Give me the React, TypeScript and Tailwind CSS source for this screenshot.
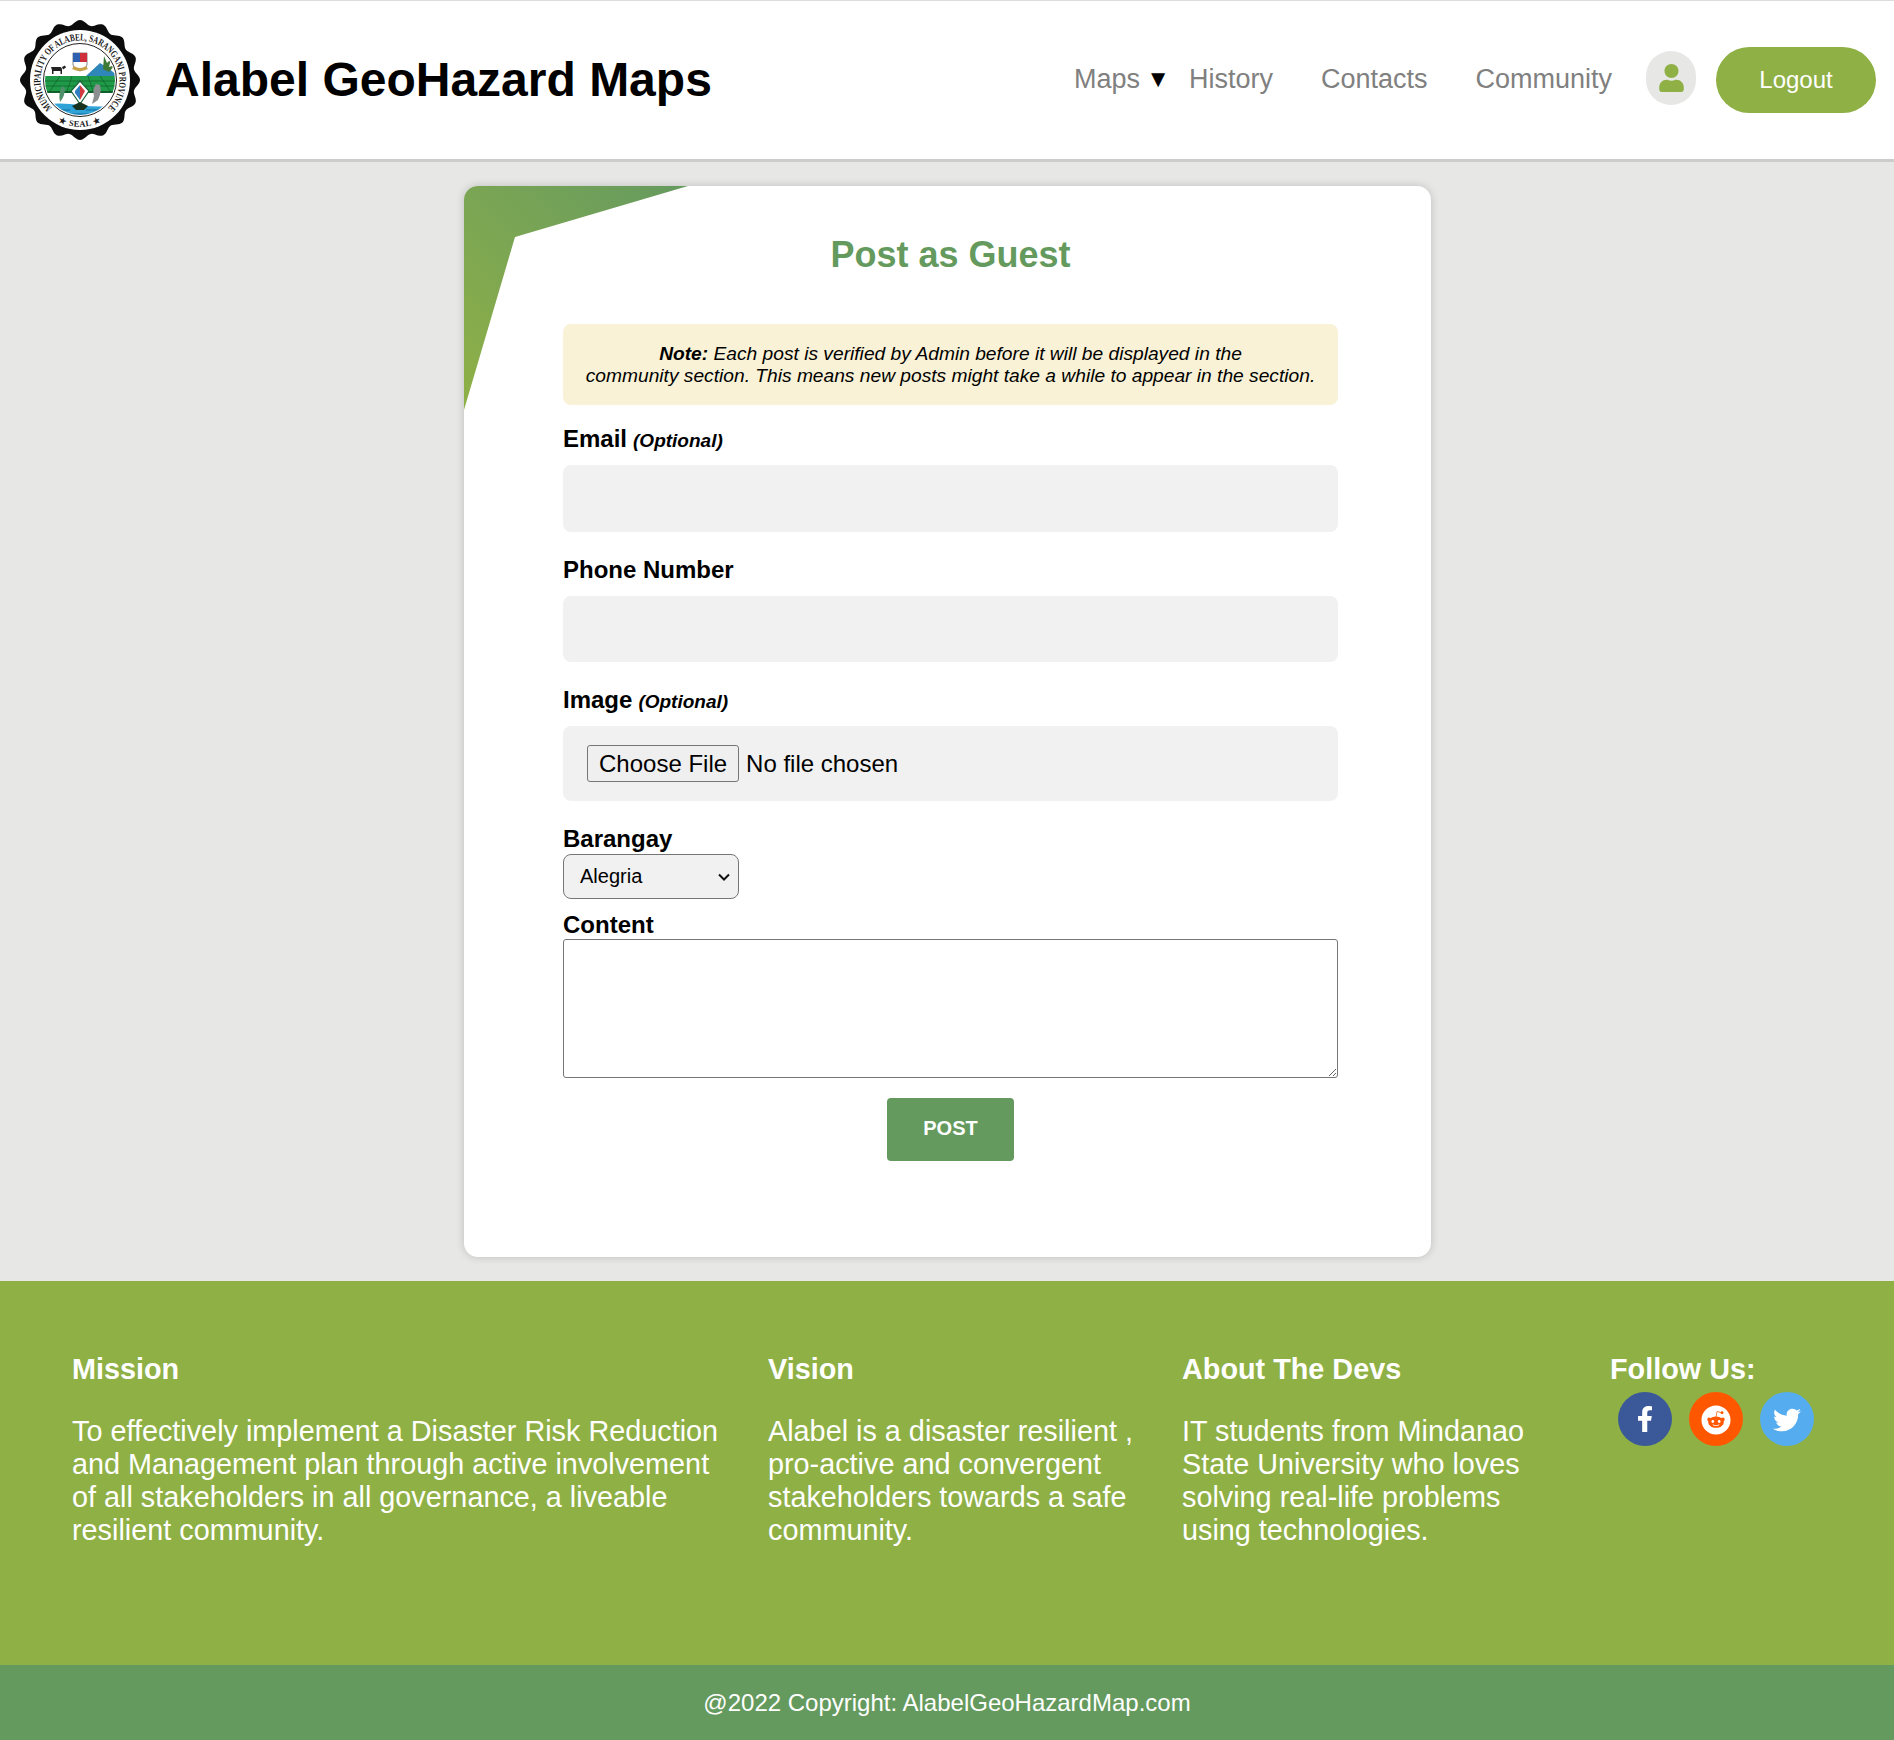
import { FaFacebookF, FaReddit, FaTwitter, FaUser } from 'react-icons/fa';

const FONT = "font-['Liberation_Sans',Arial,sans-serif]";

function scallopPath() {
  const pts: string[] = [];
  const n = 240;
  for (let i = 0; i <= n; i++) {
    const a = (i / n) * Math.PI * 2;
    const r = 57.5 + 2.5 * Math.cos(a * 16);
    pts.push(`${(60 + r * Math.sin(a)).toFixed(2)},${(60 - r * Math.cos(a)).toFixed(2)}`);
  }
  return 'M' + pts.join('L') + 'Z';
}

function Seal() {
  return (
    <svg viewBox="0 0 120 120" className="w-[120px] h-[120px] shrink-0">
      <defs>
        <clipPath id="inner">
          <circle cx="60" cy="60" r="35" />
        </clipPath>
        <path id="ringTop" d="M 32.1 87.9 A 39.5 39.5 0 1 1 87.9 87.9" fill="none" />
        <path id="ringBottom" d="M 26.8 93.2 A 47 47 0 0 0 93.2 93.2" fill="none" />
      </defs>
      <path d={scallopPath()} fill="#0c0c0c" />
      <circle cx="60" cy="60" r="50" fill="#fff" />
      <circle cx="60" cy="60" r="36.5" fill="#fff" stroke="#222" strokeWidth="1" />
      <text fontFamily="'Liberation Serif',serif" fontWeight="700" fontSize="10" fill="#1a1a1a">
        <textPath href="#ringTop" textLength="186" lengthAdjust="spacingAndGlyphs">
          MUNICIPALITY OF ALABEL, SARANGANI PROVINCE
        </textPath>
      </text>
      <text fontFamily="'Liberation Serif',serif" fontWeight="700" fontSize="8.5" fill="#1a1a1a" letterSpacing="0.4">
        <textPath href="#ringBottom" startOffset="50%" textAnchor="middle">
          ★ SEAL ★
        </textPath>
      </text>
      <g clipPath="url(#inner)">
        <rect x="20" y="20" width="80" height="80" fill="#fff" />
        <path d="M66 56 L80 43 L88 48 L98 56 Z" fill="#2f86b8" />
        <path d="M84 36 l3 7 l4 -4 l-2 8 l6 -2 l-6 7 l-6 -3 z" fill="#3f7a35" />
        <rect x="20" y="56" width="80" height="15" fill="#1f9a48" />
        <path d="M24 61 H96 M22 66 H98 M40 56 L30 71 M52 56 L47 71 M68 56 L73 71 M80 56 L90 71" stroke="#0f5f2b" strokeWidth="0.7" />
        <rect x="20" y="71" width="80" height="2" fill="#0f5f2b" />
        <path d="M20 85 Q40 82 60 85 T100 85 V100 H20 Z" fill="#2fa3d8" />
        <path d="M38 90 H50 M66 90 H80 M46 94 H74" stroke="#0e5a86" strokeWidth="0.8" />
        <path d="M53 33 H67 V44 Q67 49 60 51 Q53 49 53 44 Z" fill="#fff" stroke="#555" strokeWidth="0.7" />
        <path d="M53 33 H60 V42 H53 Z" fill="#2f5fb0" />
        <path d="M60 33 H67 V42 H60 Z" fill="#cf2f3a" />
        <path d="M54 46 Q60 50 66 46 L68 49 Q60 53 52 49 Z" fill="#c9a24a" />
        <path d="M31 47 h9 q2 0 2 3 v4 h-1.5 v-3 h-7 v3 H32 v-4 z" fill="#222" />
        <path d="M42 47 l3 -1.5 l1 2 l-3 2 z" fill="#222" />
        <path d="M60 61 L69 71 L60 84 L51 71 Z" fill="#fff" stroke="#17663a" strokeWidth="1.2" />
        <path d="M55 71 L60 65 V80 L55 73 Z" fill="#2f7fc0" />
        <path d="M60 65 L65 71 L60 80 Z" fill="#d23a3f" />
        <path d="M52 86 L60 82 L68 86 L64 90 H56 Z" fill="#17321f" />
        <path d="M42 66 Q38 74 40 82 Q45 76 45 68 Z" fill="#4f8f6a" />
        <path d="M76 64 Q72 70 74 76 L72 84 L78 80 Q82 72 80 65 Z" fill="#8b8f90" />
      </g>
    </svg>
  );
}

function Label({ text, optional }: { text: string; optional?: boolean }) {
  return (
    <label className="block text-[24px] leading-[28px] font-bold text-black">
      {text}
      {optional && <em className="text-[19px] ml-[6px]">(Optional)</em>}
    </label>
  );
}

function FooterCol({ title, children }: { title: string; children: string }) {
  return (
    <div className="pr-[44px]">
      <h3 className="text-[28.8px] leading-[34px] font-bold">{title}</h3>
      <p className="mt-[29px] text-[28.8px] leading-[33px]">{children}</p>
    </div>
  );
}

export default function App() {
  return (
    <div className={`${FONT} w-[1894px] h-[1740px] bg-[#e7e7e6] flex flex-col`}>
      <header className="h-[162px] shrink-0 bg-white border-t border-t-[#dddddd] border-b-[3px] border-b-[#cccccc] flex items-center pl-[20px] pr-[18px]">
        <Seal />
        <h1 className="ml-[25px] text-[48px] leading-none font-bold text-black">Alabel GeoHazard Maps</h1>
        <nav className="ml-auto flex items-center text-[27px] text-[#808080]">
          <a className="flex items-center pb-[2px]">
            Maps
            <span className="ml-[6px] text-[24px] text-black">▼</span>
          </a>
          <a className="ml-[19px] pb-[2px]">History</a>
          <a className="ml-[48px] pb-[2px]">Contacts</a>
          <a className="ml-[48px] pb-[2px]">Community</a>
          <div className="ml-[34px] mb-[5px] w-[50px] h-[54px] rounded-full bg-[#e7e7e6] flex items-center justify-center">
            <FaUser className="text-[#8fb045] w-[25px] h-[28px]" />
          </div>
          <button className="ml-[20px] w-[160px] h-[66px] rounded-full bg-[#8fb045] text-white text-[24px]">Logout</button>
        </nav>
      </header>

      <main className="flex-1 flex justify-center items-start pl-[1px]">
        <section className="relative overflow-hidden mt-[24px] w-[967px] h-[1071px] bg-white rounded-[14px] shadow-[0_0_8px_rgba(0,0,0,0.18)] pl-[99px] pr-[93px]">
          <div className="absolute left-0 top-0 w-[224px] h-[224px] bg-gradient-to-bl from-[#659a5e] to-[#8fb045] [clip-path:polygon(0_0,100%_0,51px_51px,0_100%)]" />
          <div className="relative">
            <h2 className="pt-[47px] text-center text-[36px] leading-[43px] font-bold text-[#659a5e]">Post as Guest</h2>
            <div className="mt-[48px] h-[81px] rounded-[8px] bg-[#f9f2d6] flex items-center justify-center text-center text-[19.2px] leading-[22px] italic text-black">
              <p>
                <b>Note:</b> Each post is verified by Admin before it will be displayed in the
                <br />
                community section. This means new posts might take a while to appear in the section.
              </p>
            </div>

            <div className="mt-[20px]">
              <Label text="Email" optional />
              <input className="block mt-[10px] w-full h-[67px] rounded-[8px] bg-[#f1f1f1]" />
            </div>
            <div className="mt-[24px]">
              <Label text="Phone Number" />
              <input className="block mt-[12px] w-full h-[66px] rounded-[8px] bg-[#f1f1f1]" />
            </div>
            <div className="mt-[24px]">
              <Label text="Image" optional />
              <div className="mt-[10px] h-[75px] rounded-[8px] bg-[#f1f1f1] flex items-center px-[24px]">
                <input
                  type="file"
                  className="w-full text-[24px] text-black file:h-[37px] file:px-[11px] file:mr-[7px] file:border file:border-[#767676] file:rounded-[3px] file:bg-[#efefef] file:text-black"
                />
              </div>
            </div>
            <div className="mt-[24px]">
              <Label text="Barangay" />
              <div className="relative mt-[1px] w-[176px]">
                <select className="block appearance-none w-full h-[45px] pb-[1px] rounded-[8px] border border-[#767676] bg-[#f1f1f1] pl-[16px] text-[20px] text-black">
                  <option>Alegria</option>
                </select>
                <svg viewBox="0 0 12 8" className="absolute right-[9px] top-[19px] w-[12px] h-[8px] pointer-events-none">
                  <path d="M1 1.5 L6 6.5 L11 1.5" fill="none" stroke="#111" strokeWidth="2" />
                </svg>
              </div>
            </div>
            <div className="mt-[12px]">
              <Label text="Content" />
              <textarea className="block w-full h-[139px] border border-[#767676] rounded-[3px] bg-white" />
            </div>
            <div className="mt-[20px] flex justify-center">
              <button className="w-[127px] h-[63px] pb-[3px] rounded-[4px] bg-[#659a5e] text-white text-[20px] font-bold">POST</button>
            </div>
          </div>
        </section>
      </main>

      <footer className="shrink-0">
        <div className="h-[384px] bg-[#8fb045] text-white pl-[72px] pt-[71px] grid grid-cols-[696px_414px_428px_1fr]">
          <FooterCol title="Mission">
            To effectively implement a Disaster Risk Reduction and Management plan through active involvement of all stakeholders in all governance, a liveable resilient community.
          </FooterCol>
          <FooterCol title="Vision">
            Alabel is a disaster resilient , pro-active and convergent stakeholders towards a safe community.
          </FooterCol>
          <FooterCol title="About The Devs">
            IT students from Mindanao State University who loves solving real-life problems using technologies.
          </FooterCol>
          <div>
            <h3 className="text-[28.8px] leading-[34px] font-bold">Follow Us:</h3>
            <div className="mt-[6px] ml-[8px] flex gap-[17px]">
              <span className="w-[54px] h-[54px] rounded-full bg-[#3b5998] flex items-center justify-center">
                <FaFacebookF className="w-[26px] h-[26px]" />
              </span>
              <span className="w-[54px] h-[54px] rounded-full bg-[#ff5700] flex items-center justify-center pt-[1px]">
                <FaReddit className="w-[30px] h-[30px]" />
              </span>
              <span className="w-[54px] h-[54px] rounded-full bg-[#55acee] flex items-center justify-center pt-[1px]">
                <FaTwitter className="w-[28px] h-[28px]" />
              </span>
            </div>
          </div>
        </div>
        <div className="h-[75px] bg-[#659a5e] flex items-center justify-center text-white text-[24px]">
          @2022 Copyright: AlabelGeoHazardMap.com
        </div>
      </footer>
    </div>
  );
}
